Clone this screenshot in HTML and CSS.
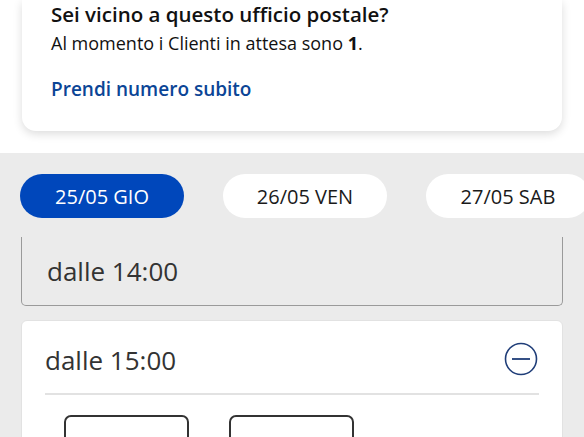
FILE: index.html
```html
<!DOCTYPE html>
<html lang="it">
<head>
  <meta charset="UTF-8" />
  <meta name="viewport" content="width=device-width, initial-scale=1.0"/>
  <title>Ufficio postale</title>
  <link rel="stylesheet" href="styles.css">
</head>
<body>
  <div class="top">
    <div class="card">
      <h2>Sei vicino a questo ufficio postale?</h2>
      <p>Al momento i Clienti in attesa sono <strong>1</strong>.</p>
      <a class="link" href="#">Prendi numero subito</a>
    </div>
  </div>

  <div class="days">
    <button class="day active">25/05 GIO</button>
    <button class="day">26/05 VEN</button>
    <button class="day">27/05 SAB</button>
  </div>

  <div class="slots">
    <div class="slot closed">
      <span>dalle 14:00</span>
    </div>
    <div class="slot open">
      <div class="slot-head">
        <span class="slot-label">dalle 15:00</span>
        <svg class="minus" width="34" height="34" viewBox="0 0 34 34">
          <circle cx="17" cy="17" r="15.5" fill="none" stroke="#1f3d78" stroke-width="1.6"/>
          <line x1="8" y1="17" x2="26" y2="17" stroke="#1f3d78" stroke-width="1.8"/>
        </svg>
      </div>
      <div class="times">
        <div class="time"></div>
        <div class="time"></div>
      </div>
    </div>
  </div>
</body>
</html>
```

FILE: styles.css
```css
body {
  margin: 0;
  font-family: "Open Sans", Arial, sans-serif;
  background-color: #ebebeb;
  color: #111;
  width: 584px;
  height: 437px;
  overflow: hidden;
}
.top {
  background: #fff;
  padding: 0 22px 22px 22px;
}
.card {
  background: #fff;
  border-radius: 0 0 14px 14px;
  box-shadow: 0 3px 10px rgba(0, 0, 0, 0.14);
  padding: 0 29px 29px 29px;
}
.card h2 {
  margin: 0;
  font-size: 20.5px;
  font-weight: 600;
  line-height: 28px;
}
.card p {
  margin: 3px 0 0 0;
  font-size: 18px;
  line-height: 24px;
}
.link {
  display: block;
  margin-top: 21px;
  color: #0b4596;
  font-size: 19px;
  font-weight: 600;
  text-decoration: none;
  line-height: 26px;
}
.days {
  display: flex;
  gap: 39px;
  padding: 21px 20px 19px 20px;
}
.day {
  flex: none;
  width: 164px;
  height: 44px;
  border: none;
  border-radius: 22px;
  background: #fff;
  color: #1a1a1a;
  font-family: "Open Sans", Arial, sans-serif;
  font-size: 20px;
  font-weight: 500;
}
.day.active {
  background: #0047bb;
  color: #fff;
}
.slots {
  padding: 0 21px;
}
.slot {
  font-size: 26px;
  color: #333;
}
.closed {
  height: 68px;
  border: 1px solid #9a9a9a;
  border-top: none;
  border-radius: 0 0 5px 5px;
  display: flex;
  align-items: center;
  padding-left: 25px;
}
.open {
  margin-top: 14px;
  background: #fff;
  border: 1px solid #e2e2e2;
  border-radius: 6px;
  padding: 0 23px;
}
.slot-head {
  height: 72px;
  display: flex;
  align-items: center;
  justify-content: space-between;
  border-bottom: 2px solid #e2e2e2;
}
.slot-label {
  padding-top: 5px;
}
.minus {
  margin-right: 1px;
  margin-top: 4px;
}
.times {
  display: flex;
  gap: 40px;
  padding: 20px 0 0 19px;
}
.time {
  width: 121px;
  height: 40px;
  border: 2px solid #333;
  border-radius: 7px;
}
```
